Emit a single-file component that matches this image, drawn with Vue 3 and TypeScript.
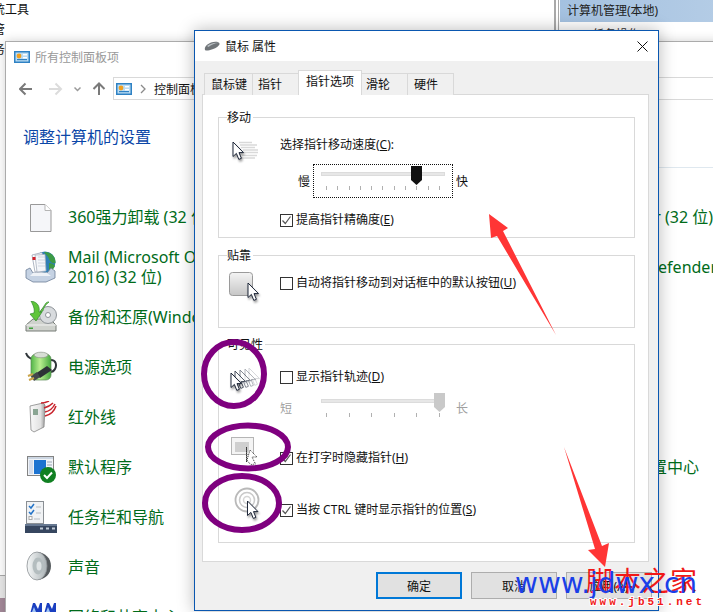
<script setup lang="ts">
interface Tab { label: string; width: number; pad: number; active?: boolean }
interface Item { key: string; text: string; side?: string; end?: number }

const tabs: Tab[] = [
  { label: '鼠标键', width: 49, pad: 6 },
  { label: '指针', width: 47, pad: 5 },
  { label: '指针选项', width: 64, pad: 7, active: true },
  { label: '滑轮', width: 47, pad: 4 },
  { label: '硬件', width: 47, pad: 6 },
]
const items: Item[] = [
  { key: 'doc', text: '360强力卸载 (32 位)', side: 'Flash Player (32 位)', end: 13 },
  { key: 'mail', text: 'Mail (Microsoft Office\n2016) (32 位)', side: 'Windows Defender', end: 9 },
  { key: 'backup', text: '备份和还原(Windows 7)' },
  { key: 'power', text: '电源选项' },
  { key: 'ir', text: '红外线' },
  { key: 'def', text: '默认程序', side: '轻松使用设置中心', end: 27 },
  { key: 'task', text: '任务栏和导航' },
  { key: 'sound', text: '声音' },
  { key: 'net', text: '网络和共享中心' },
]
const fastTicks: number[] = Array.from({ length: 11 }, (_, i) => i)
const trailTicks: number[] = Array.from({ length: 6 }, (_, i) => i)
</script>

<template>
  <div class="desk">
    <svg class="defs" width="0" height="0" aria-hidden="true">
      <defs>
        <symbol id="cur" viewBox="0 0 12 20" overflow="visible">
          <path d="M1 1V15.5L4.4 12.4 6.8 18.4 9.4 17.3 7 11.6H11.5Z" fill="#fff" stroke="#1d2638" stroke-width="1" stroke-linejoin="round" />
        </symbol>
        <symbol id="cp" viewBox="0 0 16 12">
          <rect width="16" height="12" fill="#2f82c4" />
          <rect x="1.5" y="1.5" width="13" height="9" fill="#bcdcf2" />
          <circle cx="5" cy="5" r="2.4" fill="#f0a020" />
          <rect x="9" y="3" width="4" height="1.4" fill="#fff" />
          <rect x="9" y="6" width="4" height="1.4" fill="#fff" />
          <rect x="3" y="8" width="10" height="1.2" fill="#2f82c4" />
        </symbol>
        <linearGradient id="btnG" x1="0" y1="0" x2="0" y2="1">
          <stop offset="0" stop-color="#f4f4f4" /><stop offset="1" stop-color="#c6c6c6" />
        </linearGradient>
        <linearGradient id="batG" x1="0" y1="0" x2="1" y2="0">
          <stop offset="0" stop-color="#52b548" /><stop offset=".45" stop-color="#b9ee90" /><stop offset="1" stop-color="#46a83f" />
        </linearGradient>
        <linearGradient id="spkG" x1="0" y1="0" x2="1" y2="0">
          <stop offset="0" stop-color="#f6f8f8" /><stop offset="1" stop-color="#aab2b5" />
        </linearGradient>
        <linearGradient id="towG" x1="0" y1="0" x2="1" y2="0">
          <stop offset="0" stop-color="#fafafa" /><stop offset=".7" stop-color="#e2e2e2" /><stop offset="1" stop-color="#9c9c9c" />
        </linearGradient>
      </defs>
    </svg>

    <div class="back-list">
      <div class="bl-1">系统工具</div>
      <div class="bl-2">存储管</div>
      <div class="bl-2">服务</div>
    </div>
    <div class="edge"></div>

    <div class="back-win">
      <div class="bw-inner">
        <div class="bw-title">计算机管理(本地)</div>
        <div class="bw-sub">任务操作</div>
      </div>
    </div>

    <section class="cp-win">
      <header class="cp-title">
        <svg class="cp-ico" width="16" height="12"><use href="#cp" /></svg>
        <span>所有控制面板项</span>
      </header>
      <div class="cp-tool">
        <svg class="nav" width="87" height="14" viewBox="0 0 87 14">
          <path d="M1 7H13M6.5 1.5 1 7l5.5 5.5" fill="none" stroke="#7a7a7a" stroke-width="2" />
          <path d="M30 7H42M36.5 1.5 42 7l-5.5 5.5" fill="none" stroke="#dcdcdc" stroke-width="2" />
          <path d="M55.5 5.5 58.5 8.5 61.500 5.5" fill="none" stroke="#9a9a9a" stroke-width="1.500" />
          <path d="M80 13V1.500M74.500 7 80 1.500 85.500 7" fill="none" stroke="#7a7a7a" stroke-width="2" />
        </svg>
        <div class="crumb">
          <svg width="16" height="12"><use href="#cp" /></svg>
          <svg class="chev" width="6" height="10" viewBox="0 0 6 10"><path d="M1 1l4 4-4 4" fill="none" stroke="#8a8a8a" stroke-width="1.300" /></svg>
          <span>控制面板</span>
        </div>
      </div>
      <div class="cp-head">
        <h1>调整计算机的设置</h1>
        <div class="cp-rule"></div>
      </div>
      <ul class="cp-list">
        <li v-for="it in items" :key="it.key" class="cp-row" :style="{ paddingRight: (it.end ?? 0) + 'px' }">
          <svg class="cp-icon" width="32" height="32" viewBox="0 0 32 32">
            <template v-if="it.key === 'doc'">
              <path d="M5.500 3.500H20L26 9.500V30.500H5.500Z" fill="#f5f6f9" stroke="#999" />
              <path d="M20 3.500V9.500H26" fill="#fff" stroke="#b5b5b5" />
            </template>
            <template v-else-if="it.key === 'mail'">
              <circle cx="20" cy="11" r="10.500" fill="#2f7fb5" />
              <path d="M19 1c6-.5 12 4 11.500 11-3 1-5.500-1-6.500-4s-3-4-5-7Z" fill="#3c9a45" />
              <path d="M24 12c2 0 5 1 6 3-1 3-4 5-6 5Z" fill="#3c9a45" />
              <path d="M7 4 17 1.500 20 19 10 21Z" fill="#fff" stroke="#9aa5b5" stroke-width=".8" />
              <path d="M10 4 20 3.500 21 20 12 21Z" fill="#f4f6fa" stroke="#a7b0be" stroke-width=".8" />
              <path d="M13 6H20M13 9H20M13 12H20M13 15H20" stroke="#c8cfd9" stroke-width=".8" />
              <rect x="7.500" y="6" width="3" height="3" fill="#d4202a" />
              <path d="M1 19 5 17 8 22H22L26 17 30 20V27L21 31H8L1 27Z" fill="#c5d2e3" stroke="#6d7f98" stroke-width=".8" />
              <path d="M8 22H22L26 25H5Z" fill="#eef2f7" />
            </template>
            <template v-else-if="it.key === 'backup'">
              <path d="M1 24 8 18H25L31 24V30H1Z" fill="#cfd2cd" stroke="#767c76" />
              <path d="M1 24H31" stroke="#f2f2f2" />
              <rect x="4" y="26.500" width="4" height="1.500" fill="#3f9f3a" />
              <circle cx="23" cy="14" r="8.500" fill="#d8dbde" stroke="#8f9499" />
              <circle cx="23" cy="14" r="2.500" fill="#fff" stroke="#8f9499" />
              <path d="M6 0C13 1 15 6 14 11L17 11 11 20 5 13 9 12C10 8 8 4 6 0Z" fill="#5fc53a" stroke="#2f8a2e" stroke-width=".7" />
              <path d="M24 1C20 4 18 8 18 10L15 11 21 2C22 1 23 1 24 1Z" fill="#7bd44e" stroke="#2f8a2e" stroke-width=".7" />
            </template>
            <template v-else-if="it.key === 'power'">
              <path d="M26 9c5 0 6 5 4 9-1 2-3 3-5 3" fill="none" stroke="#30363a" stroke-width="2" />
              <path d="M1 2c1 3 3 5 6 6" fill="none" stroke="#30363a" stroke-width="2" />
              <rect x="6" y="3" width="20" height="26" rx="5" fill="url(#batG)" stroke="#5c8a58" stroke-width=".7" />
              <ellipse cx="16" cy="4" rx="7" ry="2.800" fill="#d8ded5" stroke="#8c968a" stroke-width=".7" />
              <path d="M10 23 22 15 27 19 15 27Z" fill="#2d3236" />
              <path d="M6 25 12 21 15 26 9 30Z" fill="#43484c" />
              <path d="M3 25 8 23M4 29 9 27" stroke="#c9a44a" stroke-width="2" />
            </template>
            <template v-else-if="it.key === 'ir'">
              <path d="M5 5 18 2 20 4 19 26 9 31 6 29Z" fill="url(#towG)" stroke="#777" stroke-width=".7" />
              <rect x="8" y="8" width="5" height="6" fill="#8aa593" />
              <path d="M19 7c4-1 7-3 9-5M20 11c5-1 8-4 10-8M20 15c5-1 9-4 11-10M16 2c3 0 6-1 8-2" fill="none" stroke="#c8232c" stroke-width="1.500" />
            </template>
            <template v-else-if="it.key === 'def'">
              <rect x="2.500" y="5.500" width="26" height="19" fill="#f1f4f8" stroke="#838383" />
              <rect x="3" y="6" width="25" height="2" fill="#cdd7e3" />
              <rect x="4" y="9" width="4" height="14" fill="#d4dcea" />
              <rect x="9" y="9" width="12" height="14" fill="#1d73d0" />
              <path d="M22 11h5M22 14h5M22 17h5" stroke="#9aa5b5" />
              <circle cx="23" cy="24" r="8" fill="#118022" />
              <path d="M19 24l3 3 5-5.500" fill="none" stroke="#fff" stroke-width="2" />
            </template>
            <template v-else-if="it.key === 'task'">
              <rect x="1.500" y="0.500" width="17" height="22" fill="#f0f2f4" stroke="#8a8f94" />
              <path d="M4 5l2 2 3-4M4 11l2 2 3-4" fill="none" stroke="#2574c8" stroke-width="1.500" />
              <rect x="4" y="15.500" width="3" height="3" fill="#fff" stroke="#aaa" />
              <path d="M11 6h5M11 12h5M9 18h6" stroke="#b7bcc2" />
              <rect x="0" y="23" width="32" height="9" fill="#36465f" />
              <rect x="0" y="23" width="32" height="2" fill="#667891" />
              <path d="M15 27.500h3M21 27.500h3M27 27.500h3" stroke="#c0cad6" stroke-width="2" />
            </template>
            <template v-else-if="it.key === 'sound'">
              <path d="M13 1c7 1 13 6 13 14s-6 13-13 14Z" fill="#565b5e" />
              <ellipse cx="12" cy="15" rx="10" ry="14" fill="url(#spkG)" stroke="#8b9194" stroke-width=".8" />
              <ellipse cx="13" cy="15" rx="5.500" ry="8.500" fill="#b4bdbf" />
              <ellipse cx="14" cy="15" rx="2.500" ry="4.500" fill="#dfe4e5" />
            </template>
            <template v-else>
              <path d="M5 13 8 2H10L13 8 15 2H17V30H5Z" fill="#1a3fc0" />
              <path d="M19 13 22 2H24L27 8 29 2H31V30H19Z" fill="#1a3fc0" />
              <path d="M9 6 11 11H7ZM23 6 25 11H21Z" fill="#9fc4f5" />
            </template>
          </svg>
          <span class="cp-text">{{ it.text }}</span>
          <span v-if="it.side" class="cp-side">{{ it.side }}</span>
        </li>
      </ul>
    </section>

    <section class="dialog">
      <header class="dl-title">
        <svg width="16" height="10" viewBox="0 0 16 10">
          <path d="M1 9C0 6 3 3 7 1.500 10.500.5 15 .5 15.500 2.500 16 4.500 12 7 8.500 8.300 5 9.500 2 10 1 9Z" fill="#6f7478" />
          <path d="M3 5C6 2.500 11 1 14.500 2 11 2 7 4 4.500 6Z" fill="#b8bec2" />
        </svg>
        <span class="dl-name">鼠标 属性</span>
        <svg class="dl-x" width="11" height="11" viewBox="0 0 11 11"><path d="M.5.5l10 10M10.500.5l-10 10" stroke="#111" stroke-width="1" /></svg>
      </header>
      <div class="dl-body">
        <nav class="tabs">
          <div
            v-for="t in tabs"
            :key="t.label"
            class="tab"
            :class="{ on: t.active }"
            :style="{ width: t.width + 'px', paddingLeft: t.pad + 'px' }"
          >{{ t.label }}</div>
        </nav>
        <div class="panel">
          <div class="grp g1">
            <div class="leg">移动</div>
            <div class="row">
              <svg class="ico" width="61" height="14" viewBox="0 0 61 14">
                <path d="M20 4.500H33M21 7H38M22 9.500H36M24 12H39M24 14.500H39M23 17.500H38M20 20H36" stroke="#d9d9d9" stroke-width="1.400" />
                <use href="#cur" x="13" y="3" width="12" height="20" class="shadowed" />
              </svg>
              <div class="lbl lbl-up">选择指针移动速度(<u>C</u>):</div>
            </div>
            <div class="sl-row fast">
              <span class="sl-cap">慢</span>
              <div class="slider focus">
                <div class="track"></div>
                <div class="ticks"><i v-for="n in fastTicks" :key="n"></i></div>
                <svg class="thumb t-fast" width="11" height="19" viewBox="0 0 11 19"><path d="M0 0H11V14L5.500 19 0 14Z" fill="#111" /></svg>
              </div>
              <span class="sl-cap">快</span>
            </div>
            <div class="row chk-line c-fast">
              <div class="ico-sp"></div>
              <span class="box"><svg width="11" height="11" viewBox="0 0 11 11"><path d="M1.500 5.500 4.300 8.500 9.500 1.500" fill="none" stroke="#555" stroke-width="1.200" /></svg></span>
              <span class="lbl">提高指针精确度(<u>E</u>)</span>
            </div>
          </div>

          <div class="grp g2">
            <div class="leg">贴靠</div>
            <div class="row">
              <svg class="ico" width="61" height="14" viewBox="0 0 61 14">
                <rect x="10.500" y="-3.500" width="23" height="23" rx="3" fill="url(#btnG)" stroke="#9a9a9a" />
                <use href="#cur" x="28" y="6" width="12" height="20" class="shadowed" />
              </svg>
              <span class="box"></span>
              <span class="lbl">自动将指针移动到对话框中的默认按钮(<u>U</u>)</span>
            </div>
          </div>

          <div class="grp g3">
            <div class="leg">可见性</div>
            <div class="row">
              <svg class="ico" width="61" height="14" viewBox="0 0 61 14">
                <use href="#cur" x="29" y="-3" width="12" height="20" opacity=".18" />
                <use href="#cur" x="25" y="-2" width="12" height="20" opacity=".35" />
                <use href="#cur" x="20" y="-1" width="12" height="20" opacity=".55" />
                <use href="#cur" x="15" y="0" width="12" height="20" opacity=".8" />
                <use href="#cur" x="11" y="2" width="12" height="20" class="shadowed" />
              </svg>
              <span class="box"></span>
              <span class="lbl">显示指针轨迹(<u>D</u>)</span>
            </div>
            <div class="sl-row dim">
              <span class="sl-cap">短</span>
              <div class="slider">
                <div class="track"></div>
                <div class="ticks"><i v-for="n in trailTicks" :key="n"></i></div>
                <svg class="thumb t-trail" width="11" height="19" viewBox="0 0 11 19"><path d="M0 0H11V14L5.500 19 0 14Z" fill="#c9c9c9" /></svg>
              </div>
              <span class="sl-cap">长</span>
            </div>
            <div class="row r-hide">
              <svg class="ico" width="61" height="14" viewBox="0 0 61 14">
                <rect x="12.500" y="-13.500" width="22" height="17" fill="#f4f4f4" stroke="#b5b5b5" />
                <rect x="16" y="-9" width="14" height="10" fill="#cfcfcf" />
                <path d="M27.500-4V11L31-1 38 6H33L36.500 13 32 13.500 28 10Z" fill="#fff" stroke="#333" stroke-width="1" stroke-dasharray="1 1" />
              </svg>
              <span class="box"><svg width="11" height="11" viewBox="0 0 11 11"><path d="M1.500 5.500 4.300 8.500 9.500 1.500" fill="none" stroke="#555" stroke-width="1.200" /></svg></span>
              <span class="lbl">在打字时隐藏指针(<u>H</u>)</span>
            </div>
            <div class="row r-loc">
              <svg class="ico" width="61" height="14" viewBox="0 0 61 14">
                <circle cx="28" cy="-3" r="11.500" fill="none" stroke="#b9b9b9" stroke-width="1.800" />
                <circle cx="28" cy="-3" r="7.500" fill="none" stroke="#c9c9c9" stroke-width="1.500" />
                <circle cx="28" cy="-3" r="3.500" fill="none" stroke="#d5d5d5" stroke-width="1.500" />
                <use href="#cur" x="27.500" y="-3" width="12" height="20" class="shadowed" />
              </svg>
              <span class="box"><svg width="11" height="11" viewBox="0 0 11 11"><path d="M1.500 5.500 4.300 8.500 9.500 1.500" fill="none" stroke="#555" stroke-width="1.200" /></svg></span>
              <span class="lbl">当按 CTRL 键时显示指针的位置(<u>S</u>)</span>
            </div>
          </div>
        </div>
        <div class="btns">
          <button class="btn primary">确定</button>
          <button class="btn">取消</button>
          <button class="btn">应用(A)</button>
        </div>
      </div>
    </section>

    <svg class="marks" width="713" height="612" viewBox="0 0 713 612">
      <g fill="none" stroke="#7f007f" stroke-width="6">
        <ellipse cx="234" cy="374" rx="30" ry="32" />
        <ellipse cx="248" cy="447" rx="40" ry="21.500" />
        <ellipse cx="242" cy="503" rx="37" ry="27" />
      </g>
      <g fill="#ff3535">
        <polygon points="489,214 508,228 503,231 556,335 497,236 491,238" />
        <polygon points="564,447 602,546 609,543 605,567 588,550 595,549" />
      </g>
      <text x="586" y="591" class="wm-cn">脚本之家</text>
      <text x="515" y="593" class="wm-en">www.jdwx.cn</text>
      <text x="590" y="605" class="wm-sm" textLength="112">www.jb51.net</text>
    </svg>
  </div>
</template>

<style scoped>
.desk {
  position: relative;
  width: 713px;
  height: 612px;
  overflow: hidden;
  background: #fff;
  font-family: "Noto Sans", "Noto Sans CJK SC", sans-serif;
  font-size: 12px;
  color: #111;
}
.defs { position: absolute; }

.back-list { position: absolute; left: 0; top: 0; display: flex; flex-direction: column; line-height: 20px; }
.bl-1 { margin-left: -19px; }
.bl-2 { margin-left: -7px; direction: rtl; width: 12px; white-space: nowrap; }
.edge {
  position: absolute; left: 0; top: 575px; width: 5px; height: 37px;
  background: linear-gradient(#e9e9e9 0 22px, #a58a9a 22px);
  border-top: 1px solid #aaa;
}

.back-win {
  position: absolute; left: 554px; top: 0; width: 170px; height: 44px;
  border-left: 2px solid #a9a9a9; padding-left: 2px; background: #fff;
}
.bw-inner { border-left: 1px solid #a9a9a9; height: 100%; padding-left: 1px; }
.bw-title {
  height: 22px; line-height: 21px; padding-left: 7px; color: #222;
  background: linear-gradient(90deg, #a4c1e0, #b5cde6);
}
.bw-sub { padding-left: 32px; line-height: 26px; color: #333; }

.cp-win {
  position: absolute; left: 5px; top: 41px; width: 720px; height: 600px;
  background: #fff; border: 1px solid #ababab;
  box-shadow: 0 0 10px rgba(0, 0, 0, .18);
}
.cp-title { height: 30px; display: flex; align-items: center; gap: 5px; padding-left: 8px; color: #999; }
.cp-tool { height: 33px; display: flex; align-items: center; padding-left: 13px; }
.nav { margin-right: 7px; flex: none; }
.crumb {
  flex: 1; height: 23px; box-sizing: border-box; border: 1px solid #d9d9d9;
  display: flex; align-items: center; padding-left: 2px; color: #111;
}
.chev { margin: 0 8px; }
.cp-head { height: 63px; display: flex; align-items: flex-start; box-sizing: border-box; }
.cp-head h1 { margin: 20px 0 0 17px; font-size: 16px; font-weight: 400; line-height: 24px; color: #0b47a8; }
.cp-rule { margin-left: auto; width: 200px; height: 62px; border-bottom: 1px solid #dfe8ef; }
.cp-list { list-style: none; margin: 24px 0 0; padding: 0; }
.cp-row {
  height: 50px; display: flex; align-items: center; padding-left: 19px;
  font-size: 16px; line-height: 20px; color: #006b1a;
}
.cp-icon { flex: none; margin-right: 11px; }
.cp-text { white-space: pre; }
.cp-side { margin-left: auto; white-space: nowrap; }

.dialog {
  position: absolute; left: 194px; top: 30px; width: 465px; height: 581px;
  box-sizing: border-box; border: 1px solid #0a57b0; background: #f0f0f0;
  box-shadow: 0 0 16px rgba(0, 0, 0, .28);
  display: flex; flex-direction: column;
}
.dl-title {
  height: 30px; flex: none; background: #fff; display: flex; align-items: center; padding-left: 9px;
}
.dl-name { margin-left: 5px; color: #111; }
.dl-x { margin-left: auto; margin-right: 10px; }
.dl-body { flex: 1; padding: 9px 6px 0 7px; display: flex; flex-direction: column; }
.tabs { display: flex; align-items: flex-end; height: 25px; padding-left: 2px; position: relative; z-index: 1; }
.tab {
  height: 22px; box-sizing: border-box; border: 1px solid #d9d9d9; border-bottom: 0;
  margin-right: -1px; line-height: 21px; background: #f0f0f0; white-space: nowrap;
}
.tab.on { height: 25px; background: #fff; line-height: 22px; position: relative; z-index: 2; }
.panel {
  margin-top: -1px; width: 447px; height: 468px; box-sizing: border-box;
  border: 1px solid #d9d9d9; background: #fff; padding: 22px 0 0 15px; flex: none;
}
.grp { position: relative; width: 417px; box-sizing: border-box; border: 1px solid #d9d9d9; }
.leg { position: absolute; left: 8px; top: -8px; line-height: 15px; background: #fff; padding-right: 2px; }
.g1 { height: 121px; padding-top: 20px; }
.g2 { height: 73px; margin-top: 17px; padding-top: 20px; }
.g3 { height: 199px; margin-top: 16px; padding-top: 25px; }
.row { display: flex; align-items: center; height: 14px; line-height: 14px; }
.ico { flex: none; overflow: visible; }
.ico-sp { width: 61px; flex: none; }
.shadowed { filter: drop-shadow(1px 2px 1px rgba(0, 0, 0, .4)); }
.box {
  width: 13px; height: 13px; box-sizing: border-box; border: 1px solid #333; background: #fff;
  flex: none; margin-right: 3px; display: flex; align-items: center; justify-content: center;
}
.lbl { white-space: nowrap; }
.lbl-up { margin-top: 0; }
.sl-row { display: flex; align-items: center; height: 34px; padding-left: 61px; }
.sl-row.fast { margin-top: 12px; padding-left: 79px; gap: 3px; }
.sl-row.dim { margin-top: 7px; color: #a0a0a0; }
.sl-cap { width: 12px; flex: none; }
.dim .sl-cap:first-child { margin-right: 21px; }
.dim .sl-cap:last-child { margin-left: 3px; }
.slider {
  position: relative; width: 140px; height: 34px; box-sizing: border-box; flex: none;
  border: 1px solid transparent;
}
.slider.focus { border: 1px dotted #111; }
.track {
  margin: 7px 7px 0; height: 4px; box-sizing: border-box;
  background: #e7e7e7; border: 1px solid #dcdcdc;
}
.ticks { display: flex; justify-content: space-between; margin: 10px 12px 0 12px; }
.ticks i { display: block; width: 1px; height: 4px; background: #b0b0b0; }
.thumb { position: absolute; top: 1px; }
.t-fast { left: 97px; }
.t-trail { left: 120px; }
.c-fast { margin-top: 15px; }
.r-hide { margin-top: 26px; }
.r-loc { margin-top: 38px; }

.btns { display: flex; justify-content: flex-end; gap: 9px; margin-top: 10px; }
.btn {
  width: 86px; height: 27px; box-sizing: border-box; border: 1px solid #adadad; background: #e1e1e1;
  font: inherit; color: #111; padding: 0;
}
.btn.primary { border: 2px solid #0078d7; }

.marks { position: absolute; left: 0; top: 0; pointer-events: none; }
.wm-cn {
  font-family: "Noto Sans CJK SC", sans-serif; font-size: 27px; font-weight: 400;
  fill: #f01818; letter-spacing: 1px;
}
.wm-en { font-family: "DejaVu Sans", sans-serif; font-size: 28px; fill: #1a3fe8; }
.wm-sm {
  font-family: "Liberation Mono", monospace; font-size: 11px; font-weight: 700;
  fill: #f01818; stroke: #fff; stroke-width: 2px; paint-order: stroke;
}
</style>

<style>
html, body { margin: 0; background: #fff; overflow: hidden; }
</style>
